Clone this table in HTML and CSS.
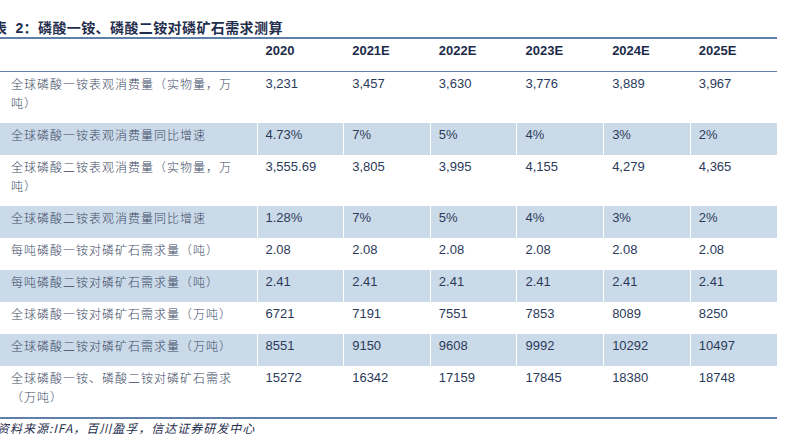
FILE: index.html
```html
<!DOCTYPE html>
<html lang="zh-CN">
<head>
<meta charset="utf-8">
<title>磷酸一铵、磷酸二铵对磷矿石需求测算</title>
<link rel="stylesheet" href="styles.css">
</head>
<body>
<div class="page">
  <div class="title"><span class="t-lead">表</span><b class="t-num">2</b>：磷酸一铵、磷酸二铵对磷矿石需求测算</div>
  <table class="data">
    <colgroup>
      <col class="c-name">
      <col class="c-val"><col class="c-val"><col class="c-val"><col class="c-val"><col class="c-val"><col class="c-val">
    </colgroup>
    <thead>
      <tr><th></th><th>2020</th><th>2021E</th><th>2022E</th><th>2023E</th><th>2024E</th><th>2025E</th></tr>
    </thead>
    <tbody>
      <tr><td class="name">全球磷酸一铵表观消费量（实物量，万吨）</td><td>3,231</td><td>3,457</td><td>3,630</td><td>3,776</td><td>3,889</td><td>3,967</td></tr>
      <tr class="alt"><td class="name">全球磷酸一铵表观消费量同比增速</td><td>4.73%</td><td>7%</td><td>5%</td><td>4%</td><td>3%</td><td>2%</td></tr>
      <tr><td class="name">全球磷酸二铵表观消费量（实物量，万吨）</td><td>3,555.69</td><td>3,805</td><td>3,995</td><td>4,155</td><td>4,279</td><td>4,365</td></tr>
      <tr class="alt"><td class="name">全球磷酸二铵表观消费量同比增速</td><td>1.28%</td><td>7%</td><td>5%</td><td>4%</td><td>3%</td><td>2%</td></tr>
      <tr><td class="name">每吨磷酸一铵对磷矿石需求量（吨）</td><td>2.08</td><td>2.08</td><td>2.08</td><td>2.08</td><td>2.08</td><td>2.08</td></tr>
      <tr class="alt"><td class="name">每吨磷酸二铵对磷矿石需求量（吨）</td><td>2.41</td><td>2.41</td><td>2.41</td><td>2.41</td><td>2.41</td><td>2.41</td></tr>
      <tr><td class="name">全球磷酸一铵对磷矿石需求量（万吨）</td><td>6721</td><td>7191</td><td>7551</td><td>7853</td><td>8089</td><td>8250</td></tr>
      <tr class="alt"><td class="name">全球磷酸二铵对磷矿石需求量（万吨）</td><td>8551</td><td>9150</td><td>9608</td><td>9992</td><td>10292</td><td>10497</td></tr>
      <tr><td class="name">全球磷酸一铵、磷酸二铵对磷矿石需求（万吨）</td><td>15272</td><td>16342</td><td>17159</td><td>17845</td><td>18380</td><td>18748</td></tr>
    </tbody>
  </table>
  <div class="source">资料来源:IFA，百川盈孚，信达证券研发中心</div>
</div>
</body>
</html>
```

FILE: styles.css
```css
html, body {
  margin: 0;
  padding: 0;
  background: #ffffff;
}

.page {
  width: 805px;
  height: 436px;
  overflow: hidden;
  font-family: "Liberation Sans", Arial, "Noto Sans CJK SC", sans-serif;
  color: #2b3a58;
}

.title {
  padding-top: 17px;
  height: 20px;
  line-height: 20px;
  margin-left: -7px;
  font-family: "Noto Sans CJK SC", sans-serif;
  font-size: 14px;
  font-weight: 700;
  letter-spacing: 0.4px;
  color: #1f2e4d;
  white-space: nowrap;
}

.t-lead {
  margin-right: 8px;
}

.t-num {
  font-family: "Liberation Sans", Arial, sans-serif;
  font-weight: 700;
  font-size: 14px;
}

.data {
  width: 777px;
  table-layout: fixed;
  border-collapse: collapse;
  border-top: 2px solid #6080aa;
  border-bottom: 2px solid #6080aa;
}

.c-name {
  width: 257px;
}

.c-val {
  width: 86.67px;
}

.data th,
.data td {
  padding: 2px 6px 11px 8px;
  line-height: 19px;
  font-size: 13px;
  text-align: left;
  vertical-align: top;
  border-left: 1px solid #ffffff;
}

.data th:first-child,
.data td:first-child {
  border-left: none;
}

.data thead th {
  font-weight: 700;
  color: #1c2b4a;
  border-bottom: 1px solid #6080aa;
}

.data td {
  color: #2b3a5a;
}

.data td.name {
  padding-left: 11px;
  padding-right: 19px;
  font-family: "Noto Sans CJK SC", sans-serif;
  font-size: 12px;
  font-weight: 300;
  letter-spacing: 1px;
  color: #3d4a66;
}

.data tr.alt td {
  background: #cbdae9;
}

.source {
  margin-top: 1px;
  margin-left: -3px;
  line-height: 15px;
  font-family: "Noto Sans CJK SC", "Liberation Sans", sans-serif;
  font-size: 12px;
  font-style: italic;
  letter-spacing: 1px;
  color: #1f2e4d;
  white-space: nowrap;
}
```
